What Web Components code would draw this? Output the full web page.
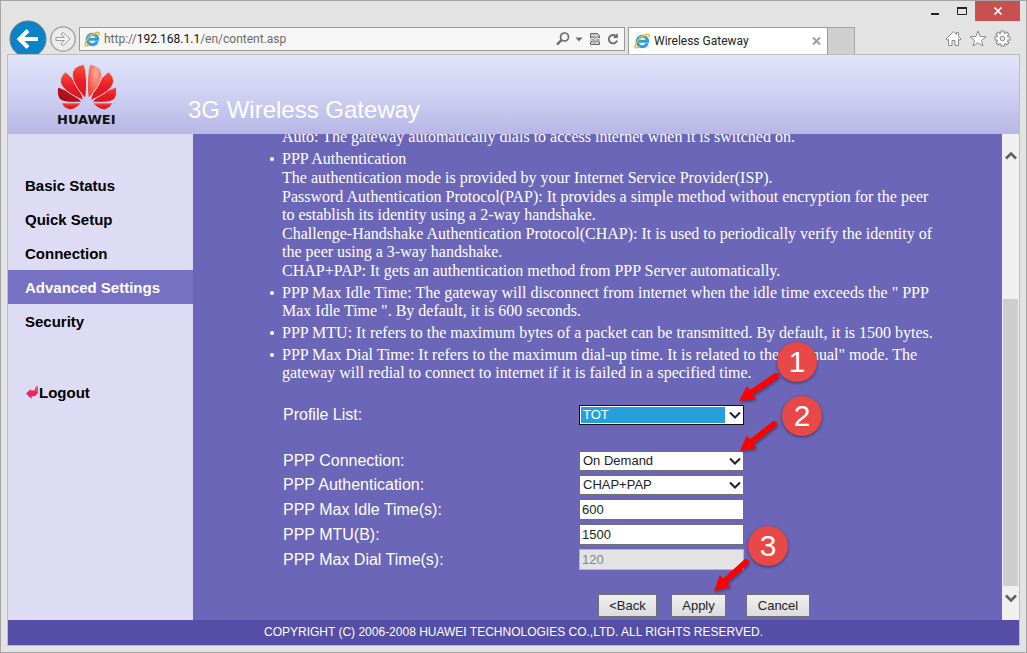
<!DOCTYPE html>
<html lang="en">
<head>
<meta charset="utf-8">
<title>Wireless Gateway</title>
<style>
html, body { margin: 0; height: 100%; }
body { font-family: "Liberation Sans", Arial, sans-serif; }
</style>
</head>
<body>
<browser-window>
  <title-bar slot="chrome"></title-bar>
  <nav-toolbar slot="chrome"></nav-toolbar>
  <gateway-app></gateway-app>
</browser-window>

<script>
const define = (name, html, setup) => {
  const tpl = document.createElement('template');
  tpl.innerHTML = html;
  customElements.define(name, class extends HTMLElement {
    constructor() {
      super();
      this.attachShadow({ mode: 'open' }).append(tpl.content.cloneNode(true));
    }
    connectedCallback() { if (setup) setup(this, this.shadowRoot); }
  });
};

const ieLogo = `
<svg viewBox="0 0 16 16" width="16" height="16" aria-hidden="true">
  <path d="M13.3 10.2A5.2 5.2 0 1 1 13.6 8.3H4.5" fill="none" stroke="#2f9be0" stroke-width="3"/>
  <path d="M12.4 4.9A5.6 5.6 0 0 0 3.2 6.6" fill="none" stroke="#7cc8f2" stroke-width="1"/>
  <path d="M15 4.400C15.600 2 14.600.800 12.200 1.500 8 2.800 2.300 8.500 1.200 12.600.700 14.900 2.300 15.500 4.900 14" fill="none" stroke="#f2b90f" stroke-width="1.500"/>
</svg>`;

define('browser-window', `
<style>
:host { display: flex; flex-direction: column; box-sizing: border-box; min-height: 100vh; padding: 0 6px 6px; background: #e3e3e3; border: 1px solid #a5a5a5; }
.page { flex: 1; display: flex; flex-direction: column; border: 1px solid #bdbdbd; position: relative; }
</style>
<slot name="chrome"></slot>
<div class="page"><slot></slot></div>`);

define('title-bar', `
<style>
:host { display: flex; justify-content: flex-end; height: 20px; }
button { border: 0; padding: 0; background: none; width: 27px; display: grid; place-items: center; }
.close { width: 45px; background: #c75050; }
</style>
<button aria-label="Minimize"><svg width="10" height="12"><path d="M1 9h8" stroke="#222" stroke-width="2"/></svg></button>
<button aria-label="Maximize"><svg width="12" height="10"><path d="M1 2h10" stroke="#222" stroke-width="2"/><path d="M1.500 2v6.500h9V2" fill="none" stroke="#222"/></svg></button>
<button class="close" aria-label="Close"><svg width="10" height="8"><path d="M1.500.5l7 7m0-7l-7 7" stroke="#fff" stroke-width="1.700"/></svg></button>`);

define('nav-toolbar', `
<style>
:host { display: flex; height: 33px; font: 12px Roboto, "Noto Sans", sans-serif; }
button { border: 0; padding: 0; background: none; display: block; }
svg { display: block; }
.back { width: 38px; height: 38px; margin-left: 2px; margin-top: -1px; }
.fwd { width: 26px; height: 26px; margin: 5px 3px 0; }
.address { flex: 1; display: flex; align-items: center; box-sizing: border-box; height: 24px; margin-top: 6px; padding: 0 5px 0 4px; border: 1px solid #9b9b9b; background: #f7f7f7; gap: 4px; }
.url { flex: 1; color: #6b6b6b; white-space: pre; }
.url b { font-weight: 400; color: #111; }
.tools { display: flex; gap: 5px; align-items: center; }
.tab { display: flex; align-items: center; box-sizing: border-box; width: 200px; height: 27px; margin: 6px 0 0 3px; padding: 0 5px; gap: 4px; background: #fff; border: 1px solid #9b9b9b; border-bottom: 0; color: #222; }
.tab span { flex: 1; }
.new { box-sizing: border-box; width: 27px; height: 27px; margin-top: 6px; background: #cfcfcf; border: 1px solid #a5a5a5; border-left: 0; border-bottom: 0; }
.icons { display: flex; gap: 7px; margin: 9px 9px 0 90px; }
.icons button { height: 17px; }
</style>
<button class="back" aria-label="Back"><svg width="38" height="38"><circle cx="19" cy="19" r="18" fill="#0a84c6" stroke="#6e7479" stroke-width="1"/><path d="M29 19H11.500M19 10.500L10.500 19l8.500 8.500" fill="none" stroke="#fff" stroke-width="4"/></svg></button>
<button class="fwd" aria-label="Forward"><svg width="26" height="26"><circle cx="13" cy="13" r="12.200" fill="#ebebeb" stroke="#9b9b9b" stroke-width="1.300"/><path d="M6 11.500h8.500l-3.500-3.500 2-1.500L20 13l-7 6.500-2-1.500 3.500-3.500H6z" fill="#f6f6f6" stroke="#9b9b9b"/></svg></button>
<div class="address">
  ${ieLogo}
  <span class="url">http://<b>192.168.1.1</b>/en/content.asp</span>
  <div class="tools">
    <button aria-label="Search"><svg width="14" height="14"><circle cx="8.500" cy="5" r="4" fill="none" stroke="#6b6b6b" stroke-width="1.700"/><path d="M5.500 8L1 12.700" stroke="#6b6b6b" stroke-width="2.400"/></svg></button>
    <button aria-label="Show address list"><svg width="8" height="5"><path d="M.5.5h7L4 4.500z" fill="#6b6b6b"/></svg></button>
    <button aria-label="Compatibility view"><svg width="14" height="14"><path d="M2.500 6V1.500h7l2 2V6L9 4.500 7 6.500 5 4.800zM2.500 12.500v-2.500l2.500-1.200 2 1.700 2-2 2.500 1.500v2.500z" fill="#c9c9c9" stroke="#6b6b6b"/><path d="M2 8.500l3-1.500 2 1.800L9 6.800l3 1.700" fill="none" stroke="#8b8b8b"/></svg></button>
    <button aria-label="Refresh"><svg width="12" height="14"><path d="M10 8.500A4.200 4.200 0 1 1 8.800 4" fill="none" stroke="#6b6b6b" stroke-width="1.900"/><path d="M10.800 1v5H5.800z" fill="#6b6b6b"/></svg></button>
  </div>
</div>
<div class="tab">${ieLogo}<span>Wireless Gateway</span><button aria-label="Close tab"><svg width="10" height="8"><path d="M1 .5l7 7m0-7l-7 7" stroke="#9b9b9b" stroke-width="1.900"/></svg></button></div>
<button class="new" aria-label="New tab"></button>
<div class="icons">
  <button aria-label="Home"><svg width="17" height="17"><path d="M8.500 1.500L1 9l1.200 1.200L3.500 9v6.500h3.500v-5h3v5h3.500V9l1.300 1.200L16 9l-2.500-2.500V2.500h-2v2z" fill="#fff" stroke="#8b8b8b"/></svg></button>
  <button aria-label="Favorites"><svg width="18" height="17"><path d="M9 1l2.100 5.500 5.900.3-4.600 3.700 1.600 5.500L9 12.800 4 16l1.600-5.500L1 6.800l5.900-.3z" fill="#fff" stroke="#8b8b8b"/></svg></button>
  <button aria-label="Tools"><svg width="17" height="17"><g transform="translate(8.500 8.500)">
    <path d="M0-8V8M-8 0H8M-5.700-5.700L5.700 5.700M5.700-5.700L-5.700 5.700" stroke="#8b8b8b" stroke-width="4.200"/><circle r="6.200" fill="#8b8b8b"/>
    <path d="M0-7V7M-7 0H7M-5-5L5 5M5-5L-5 5" stroke="#fff" stroke-width="2.200"/><circle r="5.200" fill="#fff"/>
    <circle r="2.300" fill="#e3e3e3" stroke="#8b8b8b"/></g></svg></button>
</div>`);

define('gateway-app', `
<style>
:host { flex: 1; display: grid; grid-template: 79px 1fr 25px / 185px minmax(0, 1fr) 17px; }
brand-header, page-footer { grid-column: 1 / -1; }
</style>
<brand-header></brand-header>
<side-menu></side-menu>
<settings-page></settings-page>
<scroll-rail></scroll-rail>
<page-footer></page-footer>`);

define('brand-header', `
<style>
:host { display: flex; background: linear-gradient(#e1e5fb, #cfd1f2 50%, #b8b6e6); }
.logo { width: 60px; margin-left: 49px; padding-top: 9px; }
.logo svg { display: block; }
.logo path { stroke: #d5d7f4; }
.name { font: 700 13px/16px "DejaVu Sans", sans-serif; color: #111; margin-top: 2px; }
h1 { margin: 40px 0 0 71px; font-size: 24px; line-height: 30px; font-weight: 400; color: #fff; }
</style>
<div class="logo">
<svg width="60" height="46" viewBox="0 0 60 46" role="img" aria-label="Huawei flower">
  <defs>
    <linearGradient id="r" x1="0" y1="0" x2="0" y2="1"><stop offset="0" stop-color="#f4533c"/><stop offset=".5" stop-color="#ed1c24"/><stop offset="1" stop-color="#d8161e"/></linearGradient>
    <radialGradient id="l" cx=".6" cy=".25" r=".8"><stop offset="0" stop-color="#fbae94"/><stop offset="1" stop-color="#ee3a2c"/></radialGradient>
    <linearGradient id="d" x1="0" y1="1" x2="1" y2="0"><stop offset="0" stop-color="#8c0a10"/><stop offset="1" stop-color="#ed1c24"/></linearGradient>
  </defs>
  <path d="M25 38C14 38.800 5 38.500 2.200 34.500 0 31.500 0 27 .7 23 10 26 19.500 31.500 25 38z" fill="url(#d)"/>
  <path d="M35 38C40.500 31.500 50 26 59.300 23c.7 4 .7 8.500-1.500 11.500C55 38.500 46 38.800 35 38z" fill="url(#r)"/>
  <path d="M26.500 36.500C14 31 5 25 3.500 18.500 3 14 5.500 10.500 8.500 8 17 14 24.500 26 26.500 36.500z" fill="url(#r)"/>
  <path d="M33.500 36.500C35.500 26 43 14 51.500 8c3 2.500 5.500 6 5 10.500C55 25 46 31 33.500 36.500z" fill="url(#r)"/>
  <path d="M28.500 34.500C19 24 14.500 15 15.500 9 16.500 4 21 1.300 27 .5c2.500 7 3.500 22 1.500 34z" fill="url(#r)"/>
  <path d="M31.500 34.500C29.500 23 30.500 8 33 .5c6 .8 10.500 3.500 11.500 8.500 1 6-3.500 15-13 25.500z" fill="url(#l)"/>
  <path d="M24.500 38.800C21 42.800 17 46 12.500 45.600 9 45.300 6 42.500 4 38.800z" fill="url(#r)"/>
  <path d="M35.500 38.800C39 42.800 43 46 47.500 45.600 51 45.300 54 42.500 56 38.800z" fill="url(#r)"/>
</svg>
<div class="name">HUAWEI</div>
</div>
<h1>3G Wireless Gateway</h1>`);

define('side-menu', `
<style>
:host { display: block; background: #dddcf4; font-weight: 700; font-size: 15px; line-height: 32px; }
nav { padding-top: 34px; }
a { display: block; padding: 2px 0 0 17px; color: #000; text-decoration: none; }
a.on { background: #7771c4; color: #fff; }
a.out { margin-top: 37px; display: flex; align-items: center; }
</style>
<nav>
  <a href="#status">Basic Status</a>
  <a href="#setup">Quick Setup</a>
  <a href="#connection">Connection</a>
  <a href="#advanced" class="on">Advanced Settings</a>
  <a href="#security">Security</a>
  <a href="#logout" class="out"><svg width="14" height="14" aria-hidden="true"><path d="M1 7.500L6 3v1.500h3.500L11 .5h2V7l-3 3-3.500.5v2.500z" fill="#e8265a"/><path d="M12 .5v5.500" fill="none" stroke="#f58aa5" stroke-width=".8"/></svg>Logout</a>
</nav>`);

define('help-list', `
<style>
:host { display: block; width: 656px; font: 16px/18px "Liberation Serif", "Times New Roman", serif; }
ul { margin: 0; padding: 0; list-style: none; display: flex; flex-direction: column; gap: 4px; }
li { display: grid; grid-template-columns: minmax(0, 1fr); gap: 1px; position: relative; }
li.dot::before { content: ""; position: absolute; left: -12px; top: 7px; width: 4px; height: 4px; border-radius: 50%; background: #fff; }
</style>
<ul>
  <li><div>Auto: The gateway automatically dials to access internet when it is switched on.</div></li>
  <li class="dot"><div>PPP Authentication</div>
    <div>The authentication mode is provided by your Internet Service Provider(ISP).</div>
    <div>Password Authentication Protocol(PAP): It provides a simple method without encryption for the peer to establish its identity using a 2-way handshake.</div>
    <div>Challenge-Handshake Authentication Protocol(CHAP): It is used to periodically verify the identity of the peer using a 3-way handshake.</div>
    <div>CHAP+PAP: It gets an authentication method from PPP Server automatically.</div></li>
  <li class="dot"><div>PPP Max Idle Time: The gateway will disconnect from internet when the idle time exceeds the " PPP Max Idle Time ". By default, it is 600 seconds.</div></li>
  <li class="dot"><div>PPP MTU: It refers to the maximum bytes of a packet can be transmitted. By default, it is 1500 bytes.</div></li>
  <li class="dot"><div>PPP Max Dial Time: It refers to the maximum dial-up time. It is related to the "Manual" mode. The gateway will redial to connect to internet if it is failed in a specified time.</div></li>
</ul>`);

define('form-row', `
<style>
:host { display: grid; grid-template-columns: 296px 165px; align-items: center; }
label { font-size: 16px; line-height: 20px; color: #fff; }
.box { display: grid; align-items: center; }
.box > * { grid-area: 1 / 1; }
select, input { box-sizing: border-box; width: 100%; margin: 0; border: 1px solid #707070; border-radius: 0; background: #fff; color: #222; font: 13px/16px "Liberation Sans", Arial, sans-serif; appearance: none; outline: 0; }
select { height: 20px; padding: 0 20px 0 3px; }
input { height: 21px; padding: 0 2px; }
input:disabled { background: #e3e3e3; color: #838383; border-color: #b5b5b5; }
svg { justify-self: end; margin-right: 3px; pointer-events: none; }
:host([active]) select { border-color: #111; color: #fff; background: linear-gradient(#26a0da, #26a0da) 1px 1px / 144px 16px no-repeat #fff; }
</style>
<label for="c"></label><div class="box"></div>`, (el, root) => {
  const box = root.querySelector('.box');
  root.querySelector('label').textContent = el.getAttribute('label');
  const value = el.getAttribute('value');
  if (el.getAttribute('kind') === 'select') {
    box.innerHTML = `<select id="c"><option>${value}</option></select><svg width="12" height="9" aria-hidden="true"><path d="M1 1.500l5 5 5-5" fill="none" stroke="#222" stroke-width="2"/></svg>`;
  } else {
    box.innerHTML = `<input id="c" type="text" value="${value}"${el.hasAttribute('off') ? ' disabled' : ''}>`;
  }
});

define('step-callout', `
<style>
:host { position: absolute; display: block; width: 84px; height: 72px; pointer-events: none; }
svg { position: absolute; inset: 0; overflow: visible; filter: drop-shadow(1px 2px 1px rgb(0 0 0 / .3)); }
.n { position: absolute; right: 0; top: 0; width: 40px; height: 40px; border-radius: 50%; background: #e84848; box-shadow: 0 1px 3px rgb(0 0 0 / .5); color: #fff; font-size: 30px; line-height: 40px; text-align: center; }
</style>
<svg width="84" height="72" aria-hidden="true"><line stroke="#f00" stroke-width="6" stroke-linecap="round"/><path fill="#f00"/></svg>
<div class="n"><slot></slot></div>`, (el, root) => {
  // "tail" and "tip" are points relative to the centre of the badge
  const [tx, ty] = el.getAttribute('tail').split(' ').map(Number);
  const [hx, hy] = el.getAttribute('tip').split(' ').map(Number);
  const cx = 64, cy = 20;
  const len = Math.hypot(hx - tx, hy - ty);
  const ux = (hx - tx) / len, uy = (hy - ty) / len;
  const bx = cx + hx - ux * 15, by = cy + hy - uy * 15;
  const line = root.querySelector('line');
  line.setAttribute('x1', cx + tx); line.setAttribute('y1', cy + ty);
  line.setAttribute('x2', bx); line.setAttribute('y2', by);
  root.querySelector('path').setAttribute('d',
    `M${cx + hx} ${cy + hy}L${bx - uy * 8} ${by + ux * 8}L${bx + uy * 8} ${by - ux * 8}z`);
});

define('settings-page', `
<style>
:host { display: flex; flex-direction: column; justify-content: flex-end; position: relative; overflow: hidden; background: #6c66b9; color: #fff; }
help-list { margin: -7px 0 0 89px; }
form { margin: 23px 0 0 90px; padding-bottom: 3px; }
.group { display: grid; gap: 4px; margin-top: 26px; }
.actions { display: flex; gap: 14px; margin: 24px 0 0 315px; }
button { box-sizing: border-box; height: 23px; width: 59px; padding: 0; border: 1px solid #707070; border-radius: 0; background: linear-gradient(#f0f0f0, #dcdcdc); color: #222; font: 13px "Liberation Sans", Arial, sans-serif; }
.apply { width: 55px; }
.cancel { width: 64px; margin-left: 6px; }
.s1 { left: 540px; bottom: 206px; }
.s2 { left: 545px; bottom: 152px; }
.s3 { left: 511px; bottom: 22px; }
</style>
<help-list></help-list>
<form onsubmit="return false">
  <form-row kind="select" label="Profile List:" value="TOT" active></form-row>
  <div class="group">
    <form-row kind="select" label="PPP Connection:" value="On Demand"></form-row>
    <form-row kind="select" label="PPP Authentication:" value="CHAP+PAP"></form-row>
    <form-row label="PPP Max Idle Time(s):" value="600"></form-row>
    <form-row label="PPP MTU(B):" value="1500"></form-row>
    <form-row label="PPP Max Dial Time(s):" value="120" off></form-row>
  </div>
  <div class="actions">
    <button type="button">&lt;Back</button>
    <button type="submit" class="apply">Apply</button>
    <button type="reset" class="cancel">Cancel</button>
  </div>
</form>
<step-callout class="s1" tail="-21 14" tip="-58 39">1</step-callout>
<step-callout class="s2" tail="-28 8" tip="-62 35">2</step-callout>
<step-callout class="s3" tail="-22 16" tip="-54 45">3</step-callout>`);

define('scroll-rail', `
<style>
:host { display: flex; flex-direction: column; background: #f0f0f0; }
button { border: 0; padding: 0; background: none; display: flex; justify-content: center; }
.up { height: 42px; align-items: center; }
.down { height: 34px; padding-top: 8px; }
.track { flex: 1; display: grid; grid-template-rows: 3fr 7fr; }
.thumb { grid-row: 2; margin: 0 1px; background: #cdcdcd; }
</style>
<button class="up" aria-label="Scroll up"><svg width="12" height="9"><path d="M1 7.500l5-5 5 5" fill="none" stroke="#606060" stroke-width="2.600"/></svg></button>
<div class="track"><div class="thumb"></div></div>
<button class="down" aria-label="Scroll down"><svg width="12" height="9"><path d="M1 1.500l5 5 5-5" fill="none" stroke="#606060" stroke-width="2.600"/></svg></button>`);

define('page-footer', `
<style>
:host { display: block; background: #554ea7; color: #fff; font-size: 12px; line-height: 25px; text-align: center; }
</style>
COPYRIGHT (C) 2006-2008 HUAWEI TECHNOLOGIES CO.,LTD. ALL RIGHTS RESERVED.`);
</script>
</body>
</html>
